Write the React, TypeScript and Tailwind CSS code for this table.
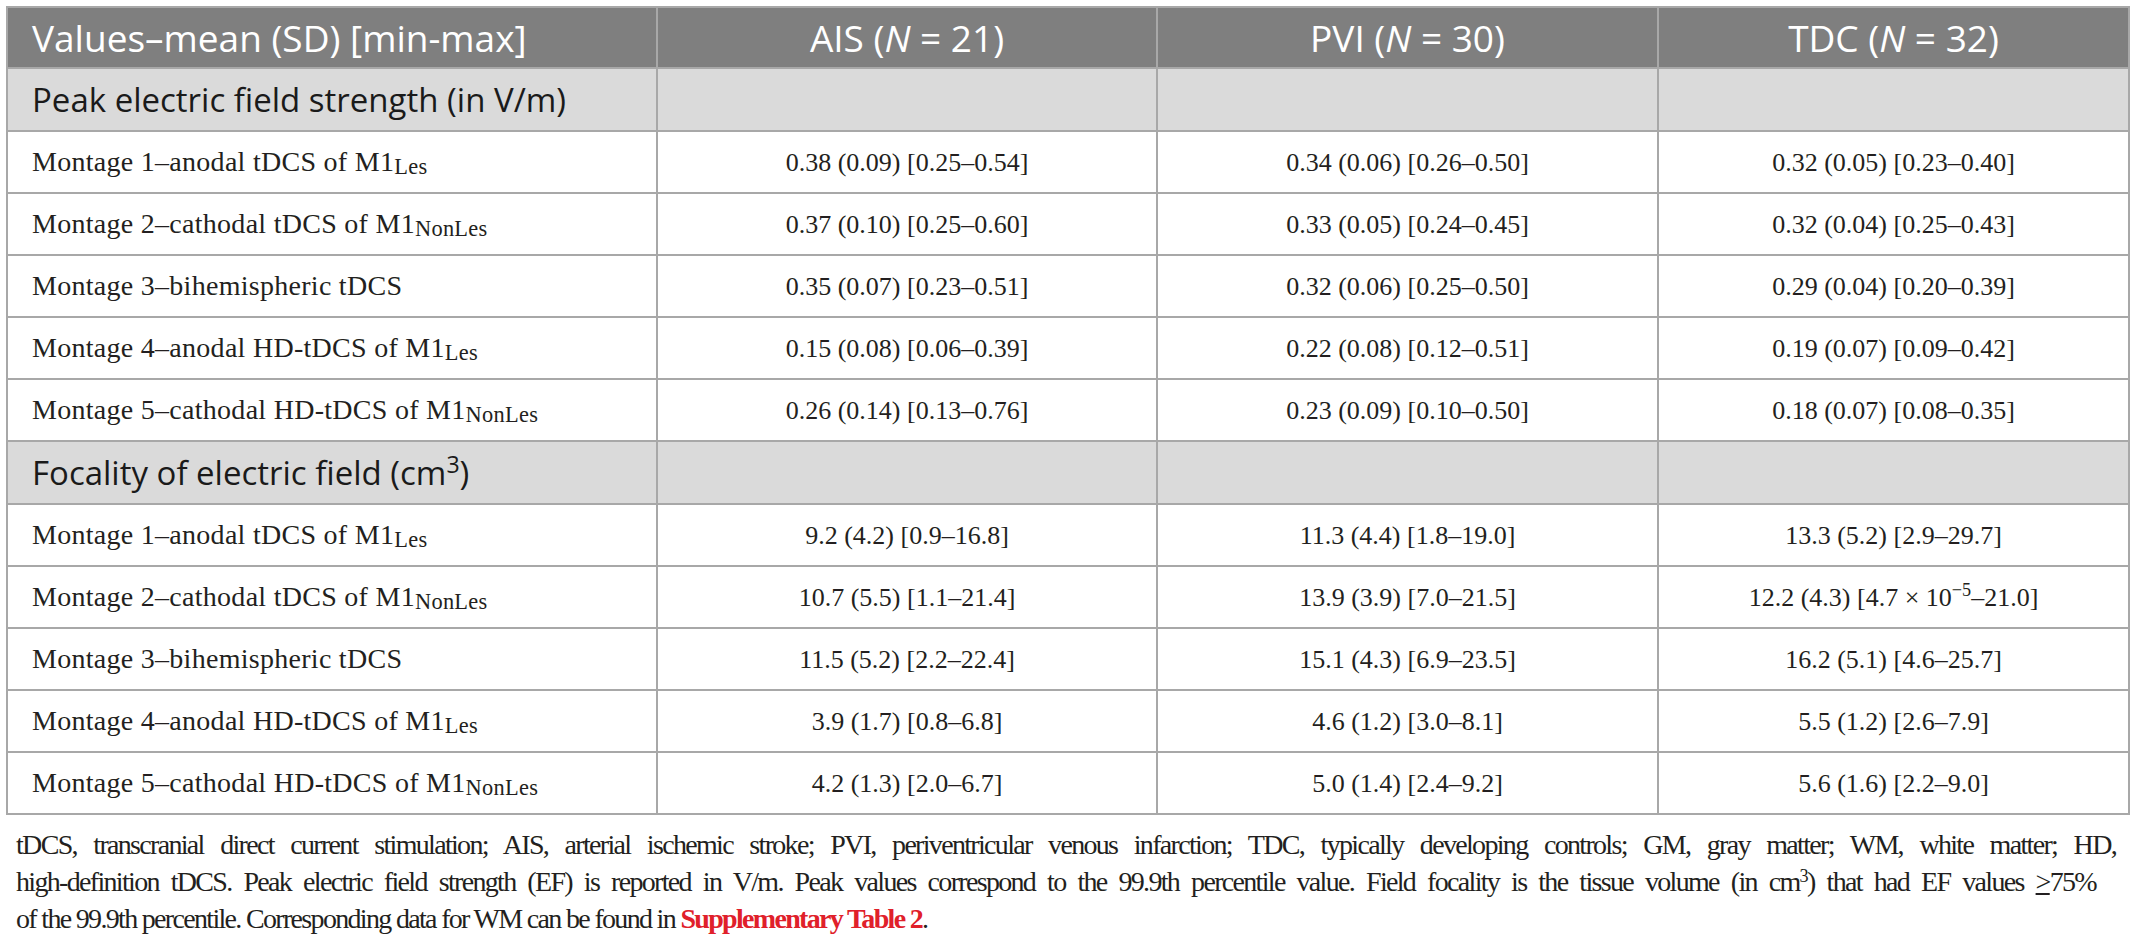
import type { ReactNode } from 'react'

const sans = "font-['Open_Sans',_'Noto_Sans',_sans-serif]"
const serif = "font-['Liberation_Serif',_'Times_New_Roman',_serif]"

function Sub({ children }: { children: ReactNode }) {
  return <sub className="text-[0.8em] relative top-[0.12em]">{children}</sub>
}

type Row = { label: ReactNode; v: ReactNode[] }

const peak: Row[] = [
  { label: <>Montage 1–anodal tDCS of M1<Sub>Les</Sub></>, v: ['0.38 (0.09) [0.25–0.54]', '0.34 (0.06) [0.26–0.50]', '0.32 (0.05) [0.23–0.40]'] },
  { label: <>Montage 2–cathodal tDCS of M1<Sub>NonLes</Sub></>, v: ['0.37 (0.10) [0.25–0.60]', '0.33 (0.05) [0.24–0.45]', '0.32 (0.04) [0.25–0.43]'] },
  { label: <>Montage 3–bihemispheric tDCS</>, v: ['0.35 (0.07) [0.23–0.51]', '0.32 (0.06) [0.25–0.50]', '0.29 (0.04) [0.20–0.39]'] },
  { label: <>Montage 4–anodal HD-tDCS of M1<Sub>Les</Sub></>, v: ['0.15 (0.08) [0.06–0.39]', '0.22 (0.08) [0.12–0.51]', '0.19 (0.07) [0.09–0.42]'] },
  { label: <>Montage 5–cathodal HD-tDCS of M1<Sub>NonLes</Sub></>, v: ['0.26 (0.14) [0.13–0.76]', '0.23 (0.09) [0.10–0.50]', '0.18 (0.07) [0.08–0.35]'] },
]

const focality: Row[] = [
  { label: <>Montage 1–anodal tDCS of M1<Sub>Les</Sub></>, v: ['9.2 (4.2) [0.9–16.8]', '11.3 (4.4) [1.8–19.0]', '13.3 (5.2) [2.9–29.7]'] },
  {
    label: <>Montage 2–cathodal tDCS of M1<Sub>NonLes</Sub></>,
    v: ['10.7 (5.5) [1.1–21.4]', '13.9 (3.9) [7.0–21.5]', <>12.2 (4.3) [4.7 × 10<sup className="text-[0.7em]">−5</sup>–21.0]</>],
  },
  { label: <>Montage 3–bihemispheric tDCS</>, v: ['11.5 (5.2) [2.2–22.4]', '15.1 (4.3) [6.9–23.5]', '16.2 (5.1) [4.6–25.7]'] },
  { label: <>Montage 4–anodal HD-tDCS of M1<Sub>Les</Sub></>, v: ['3.9 (1.7) [0.8–6.8]', '4.6 (1.2) [3.0–8.1]', '5.5 (1.2) [2.6–7.9]'] },
  { label: <>Montage 5–cathodal HD-tDCS of M1<Sub>NonLes</Sub></>, v: ['4.2 (1.3) [2.0–6.7]', '5.0 (1.4) [2.4–9.2]', '5.6 (1.6) [2.2–9.0]'] },
]

const cell = 'border-2 border-[#a8a8a8]'

function Section({ title }: { title: ReactNode }) {
  return (
    <tr className="h-[63px] bg-[#dadada]">
      <td className={`${cell} pl-[24px] ${sans} text-[33px] text-[#1a1a1a]`}>{title}</td>
      <td className={cell} />
      <td className={cell} />
      <td className={cell} />
    </tr>
  )
}

function Rows({ rows }: { rows: Row[] }) {
  return (
    <>
      {rows.map((r, i) => (
        <tr key={i} className={`h-[62px] ${serif} text-[26px] text-[#231f20]`}>
          <td className={`${cell} pl-[24px] text-[28px] tracking-[0.01em]`}>{r.label}</td>
          {r.v.map((x, j) => (
            <td key={j} className={`${cell} text-center`}>{x}</td>
          ))}
        </tr>
      ))}
    </>
  )
}

export default function App() {
  return (
    <div className="bg-white min-h-screen w-[2135px] pt-[6px] pl-[6px]">
      <table className="table-fixed border-collapse w-[2122px] border-2 border-[#a0a0a0]">
        <colgroup>
          <col className="w-[650px]" />
          <col className="w-[500px]" />
          <col className="w-[501px]" />
          <col className="w-[471px]" />
        </colgroup>
        <thead>
          <tr className={`h-[61px] bg-[#7f7f7f] text-white ${sans} text-[37px]`}>
            <th className={`${cell} pl-[24px] text-left font-normal`}>Values–mean (SD) [min-max]</th>
            <th className={`${cell} font-normal`}>AIS (<i>N</i> = 21)</th>
            <th className={`${cell} font-normal`}>PVI (<i>N</i> = 30)</th>
            <th className={`${cell} font-normal`}>TDC (<i>N</i> = 32)</th>
          </tr>
        </thead>
        <tbody>
          <Section title="Peak electric field strength (in V/m)" />
          <Rows rows={peak} />
          <Section title={<>Focality of electric field (cm<sup className="text-[0.7em]">3</sup>)</>} />
          <Rows rows={focality} />
        </tbody>
      </table>
      <div className={`${serif} text-[28px] leading-[37px] text-[#231f20] pt-[11px] pl-[10px] w-[2110px] tracking-[-0.06em]`}>
        <div className="text-justify [text-align-last:justify]">
          tDCS, transcranial direct current stimulation; AIS, arterial ischemic stroke; PVI, periventricular venous infarction; TDC, typically developing controls; GM, gray matter; WM, white matter; HD,
        </div>
        <div className="text-justify [text-align-last:justify] pr-[20px]">
          high-definition tDCS. Peak electric field strength (EF) is reported in V/m. Peak values correspond to the 99.9th percentile value. Field focality is the tissue volume (in cm
          <sup className="text-[0.65em]">3</sup>) that had EF values <span className="underline">&gt;</span>75%
        </div>
        <div>
          of the 99.9th percentile. Corresponding data for WM can be found in{' '}
          <span className="font-bold text-[#e0202a]">Supplementary Table 2</span>.
        </div>
      </div>
    </div>
  )
}
